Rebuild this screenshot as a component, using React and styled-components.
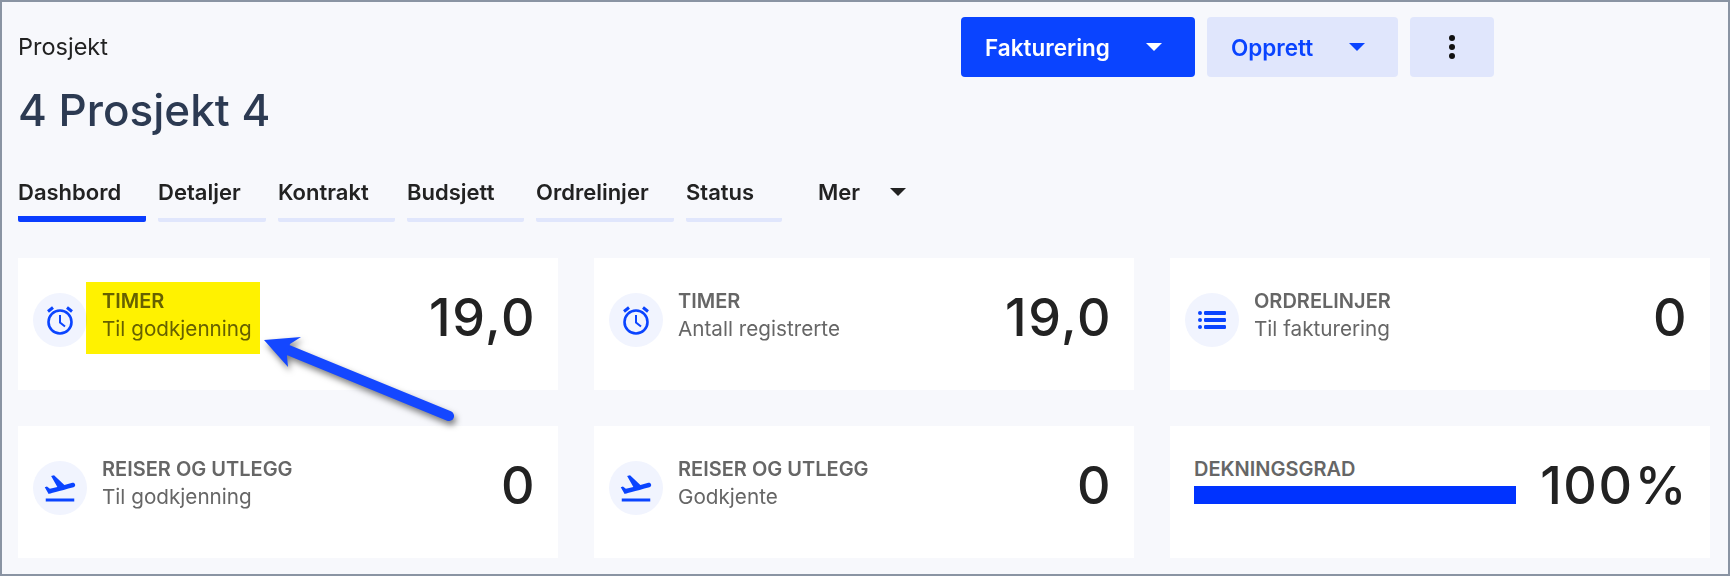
import React from 'react';
import styled, { createGlobalStyle } from 'styled-components';
import { MdFlightTakeoff } from 'react-icons/md';

const GlobalStyle = createGlobalStyle`
  html, body {
    margin: 0;
    padding: 0;
    background: #f7f8fc;
  }
  body {
    font-family: Inter, "Liberation Sans", sans-serif;
  }
`;

const Page = styled.div`
  position: relative;
  box-sizing: border-box;
  width: 1730px;
  height: 576px;
  padding: 15px 18px 0 16px;
  border: 2px solid #8a94a3;
  background: #f7f8fc;
  overflow: hidden;
`;

const Header = styled.header`
  display: flex;
  align-items: flex-start;
  gap: 693px;
`;

const TitleBlock = styled.div`
  width: 250px;
  padding-top: 17px;
`;

const Eyebrow = styled.div`
  font-size: 23.5px;
  line-height: 26px;
  color: #222;
`;

const Title = styled.h1`
  margin: 25px 0 0;
  font-size: 44px;
  line-height: 50px;
  font-weight: 500;
  color: #2c3a52;
  white-space: nowrap;
`;

const Actions = styled.div`
  display: flex;
  gap: 12px;
`;

const ActionButton = styled.button`
  display: flex;
  align-items: center;
  justify-content: space-between;
  box-sizing: border-box;
  width: ${props => props.$width}px;
  height: 60px;
  padding: 0 33px 0 24px;
  border: 0;
  border-radius: 4px;
  font-family: inherit;
  font-size: 22.5px;
  font-weight: 600;
  background: ${props => (props.$primary ? '#0a44ff' : '#e0e6fc')};
  color: ${props => (props.$primary ? '#ffffff' : '#0a44ff')};
`;

const IconButton = styled(ActionButton)`
  justify-content: center;
  padding: 0;
  color: #111;
`;

const Caret = styled.span`
  width: 0;
  height: 0;
  border-left: 8px solid transparent;
  border-right: 8px solid transparent;
  border-top: 8px solid currentColor;
`;

const Tabs = styled.nav`
  display: flex;
  gap: 12px;
  margin-top: 35px;
`;

const Tab = styled.div`
  box-sizing: border-box;
  width: ${props => props.$width}px;
  height: 52px;
  padding-top: 9px;
  border-bottom: ${props => (props.$active ? '6px solid #0a3dff' : '4px solid #e0e6fc')};
  border-radius: 0 0 2px 2px;
  font-size: 22px;
  line-height: 26px;
  font-weight: 600;
  color: #222;
  white-space: nowrap;
`;

const MoreTab = styled.div`
  display: flex;
  align-items: center;
  gap: 30px;
  height: 44px;
  margin-left: 24px;
  font-size: 22px;
  font-weight: 600;
  color: #222;
`;

const CardGrid = styled.section`
  display: grid;
  grid-template-columns: repeat(3, 540px);
  grid-auto-rows: 132px;
  gap: 36px;
  margin-top: 36px;
`;

const Card = styled.article`
  position: relative;
  display: flex;
  align-items: flex-start;
  padding: 35px 22px 0 15px;
  background: #ffffff;
`;

const IconCircle = styled.div`
  flex: none;
  display: flex;
  align-items: center;
  justify-content: center;
  width: 54px;
  height: 54px;
  margin-right: 15px;
  border-radius: 50%;
  background: #f1f4fe;
  color: #0a44ff;
`;

const CardText = styled.div`
  flex: 1;
  min-width: 0;
  margin-top: -6px;
`;

const CardLabel = styled.div`
  font-size: 20px;
  line-height: 28px;
  font-weight: 600;
  color: #666;
  white-space: nowrap;
`;

const CardSub = styled.div`
  font-size: 20.7px;
  line-height: 28px;
  color: #666;
  white-space: nowrap;
`;

const CardValue = styled.div`
  flex: none;
  margin-top: -6px;
  font-size: 52px;
  line-height: 62px;
  font-weight: 500;
  letter-spacing: 1.5px;
  word-spacing: -14px;
  color: #222;
  white-space: nowrap;
`;

const MeterBlock = styled.div`
  width: 322px;
  margin: -6px 0 0 9px;
`;

const MeterTrack = styled.div`
  height: 18px;
  margin-top: 3px;
  background: #e0e6fc;
`;

const MeterFill = styled.div`
  height: 100%;
  background: #0033ff;
`;

const Spacer = styled.div`
  flex: 1;
`;

const Highlight = styled.div`
  position: absolute;
  left: 68px;
  top: 24px;
  width: 174px;
  height: 72px;
  background: #fff200;
  mix-blend-mode: multiply;
`;

const ArrowOverlay = styled.svg`
  position: absolute;
  left: 248px;
  top: 318px;
  width: 220px;
  height: 120px;
  overflow: visible;
  filter: drop-shadow(2px 4px 3px rgba(0, 0, 0, 0.5));
`;

const AlarmIcon = () => (
  <svg width="32" height="32" viewBox="0 0 32 32" fill="none" stroke="currentColor" strokeWidth="2.6">
    <circle cx="16" cy="18" r="11.5" />
    <path d="M16 11v7.5l5 4" strokeWidth="2" />
    <path d="M4 7.5l5-4M28 7.5l-5-4" strokeWidth="3" />
  </svg>
);

const ListIcon = () => (
  <svg width="28" height="18" viewBox="0 0 28 18" fill="currentColor">
    <circle cx="2" cy="2" r="2" />
    <circle cx="2" cy="9" r="2" />
    <circle cx="2" cy="16" r="2" />
    <rect x="6" y="0" width="22" height="4" rx="1.2" />
    <rect x="6" y="7" width="22" height="4" rx="1.2" />
    <rect x="6" y="14" width="22" height="4" rx="1.2" />
  </svg>
);

const DotsIcon = () => (
  <svg width="6" height="24" viewBox="0 0 6 24" fill="currentColor">
    <circle cx="3" cy="3" r="3" />
    <circle cx="3" cy="12" r="3" />
    <circle cx="3" cy="21" r="3" />
  </svg>
);

const tabs = [
  { label: 'Dashbord', width: 128, active: true },
  { label: 'Detaljer', width: 108 },
  { label: 'Kontrakt', width: 117 },
  { label: 'Budsjett', width: 117 },
  { label: 'Ordrelinjer', width: 138 },
  { label: 'Status', width: 96 },
];

const cards = [
  { icon: <AlarmIcon />, label: 'TIMER', sub: 'Til godkjenning', value: '19,0', highlight: true },
  { icon: <AlarmIcon />, label: 'TIMER', sub: 'Antall registrerte', value: '19,0' },
  { icon: <ListIcon />, label: 'ORDRELINJER', sub: 'Til fakturering', value: '0' },
  { icon: <MdFlightTakeoff size={36} />, label: 'REISER OG UTLEGG', sub: 'Til godkjenning', value: '0' },
  { icon: <MdFlightTakeoff size={36} />, label: 'REISER OG UTLEGG', sub: 'Godkjente', value: '0' },
];

const App = () => {
  return (
    <Page>
      <GlobalStyle />
      <Header>
        <TitleBlock>
          <Eyebrow>Prosjekt</Eyebrow>
          <Title>4 Prosjekt 4</Title>
        </TitleBlock>
        <Actions>
          <ActionButton $primary $width={234}>
            Fakturering
            <Caret />
          </ActionButton>
          <ActionButton $width={191}>
            Opprett
            <Caret />
          </ActionButton>
          <IconButton $width={84} aria-label="Mer">
            <DotsIcon />
          </IconButton>
        </Actions>
      </Header>
      <Tabs>
        {tabs.map(tab => (
          <Tab key={tab.label} $width={tab.width} $active={tab.active}>
            {tab.label}
          </Tab>
        ))}
        <MoreTab>
          Mer
          <Caret />
        </MoreTab>
      </Tabs>
      <CardGrid>
        {cards.map((card, index) => (
          <Card key={index}>
            <IconCircle>{card.icon}</IconCircle>
            <CardText>
              <CardLabel>{card.label}</CardLabel>
              <CardSub>{card.sub}</CardSub>
            </CardText>
            <CardValue>{card.value}</CardValue>
            {card.highlight && <Highlight />}
          </Card>
        ))}
        <Card>
          <MeterBlock>
            <CardLabel>DEKNINGSGRAD</CardLabel>
            <MeterTrack>
              <MeterFill style={{ width: '100%' }} />
            </MeterTrack>
          </MeterBlock>
          <Spacer />
          <CardValue>100 %</CardValue>
        </Card>
      </CardGrid>
      <ArrowOverlay viewBox="0 0 220 120">
        <path d="M38 30L199 96" stroke="#1447ff" strokeWidth="10" strokeLinecap="round" />
        <path d="M14 20L51 17L40 24L37 36L38 47Z" fill="#1447ff" />
      </ArrowOverlay>
    </Page>
  );
};

export default App;
